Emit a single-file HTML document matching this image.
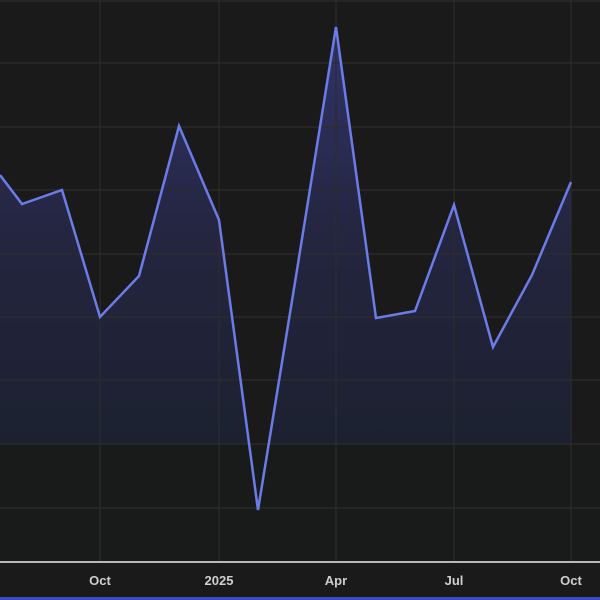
<!DOCTYPE html>
<html><head><style>
html,body{margin:0;padding:0;background:#1a1a1a;}
body{width:600px;height:600px;overflow:hidden;position:relative;font-family:"Liberation Sans",sans-serif;}
</style></head><body>
<svg width="600" height="600" viewBox="0 0 600 600" style="position:absolute;left:0;top:0">
<defs>
<linearGradient id="g" x1="0" y1="27" x2="0" y2="444" gradientUnits="userSpaceOnUse">
<stop offset="0" stop-color="#31346a"/>
<stop offset="0.5" stop-color="#24253f"/>
<stop offset="1" stop-color="#1c2130"/>
</linearGradient>
<clipPath id="c"><rect x="0" y="0" width="600" height="444"/></clipPath>
</defs>
<rect width="600" height="600" fill="#1a1a1a"/>
<rect x="0" y="444" width="600" height="118" fill="#191b1a"/>
<polygon clip-path="url(#c)" fill="url(#g)" points="0,444 0,175 22,204 62,190 100,317 139,276 179,126 219,220 258,510 297,270 336,27 376,318 415,311 454,205 493,347 532,275 571,182 571,444"/>
<g stroke="#2c2c2e" stroke-width="1.2">
<line x1="0" y1="1" x2="600" y2="1"/>
<line x1="0" y1="63" x2="600" y2="63"/>
<line x1="0" y1="127" x2="600" y2="127"/>
<line x1="0" y1="190" x2="600" y2="190"/>
<line x1="0" y1="254" x2="600" y2="254"/>
<line x1="0" y1="317" x2="600" y2="317"/>
<line x1="0" y1="380" x2="600" y2="380"/>
<line x1="0" y1="444" x2="600" y2="444"/>
<line x1="0" y1="508" x2="600" y2="508"/>
<line x1="100" y1="0" x2="100" y2="562"/>
<line x1="219" y1="0" x2="219" y2="562"/>
<line x1="336" y1="0" x2="336" y2="562"/>
<line x1="454" y1="0" x2="454" y2="562"/>
<line x1="571" y1="0" x2="571" y2="562"/>
</g>
<polyline fill="none" stroke="#6b7ce8" stroke-width="2.5" stroke-linejoin="miter" points="0,175 22,204 62,190 100,317 139,276 179,126 219,220 258,510 297,270 336,27 376,318 415,311 454,205 493,347 532,275 571,182"/>
<rect x="0" y="561" width="600" height="2" fill="#b8b8b8"/>
<rect x="0" y="563" width="600" height="34" fill="#1a1a1a"/>
<rect x="0" y="597" width="600" height="3" fill="#3a4cc0"/>
<g fill="#cfcfcf" font-size="13" font-weight="bold" text-anchor="middle">
<text x="100" y="585">Oct</text>
<text x="219" y="585">2025</text>
<text x="336" y="585">Apr</text>
<text x="454" y="585">Jul</text>
<text x="571" y="585">Oct</text>
</g>
</svg>
</body></html>
